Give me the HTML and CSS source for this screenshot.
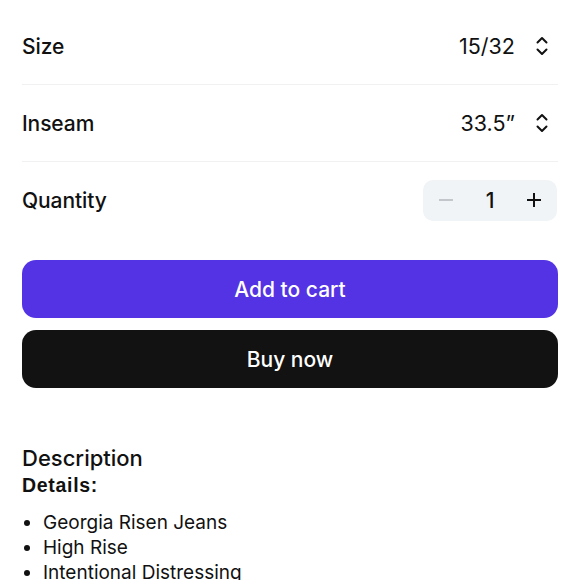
FILE: index.html
```html
<!DOCTYPE html>
<html>
<head>
<meta charset="utf-8">
<link rel="stylesheet" href="styles.css">
</head>
<body>
<div class="page">
  <div class="row">
    <span class="label">Size</span>
    <div class="select">
      <span class="value">15/32</span>
      <svg class="chev" width="14" height="22" viewBox="0 0 14 22"><path d="M2.5 7.5 L7 3 L11.5 7.5 M2.5 14.5 L7 19 L11.5 14.5" fill="none" stroke="#111" stroke-width="2" stroke-linecap="round" stroke-linejoin="round"/></svg>
    </div>
  </div>
  <div class="row">
    <span class="label">Inseam</span>
    <div class="select">
      <span class="value">33.5”</span>
      <svg class="chev" width="14" height="22" viewBox="0 0 14 22"><path d="M2.5 7.5 L7 3 L11.5 7.5 M2.5 14.5 L7 19 L11.5 14.5" fill="none" stroke="#111" stroke-width="2" stroke-linecap="round" stroke-linejoin="round"/></svg>
    </div>
  </div>
  <div class="row last">
    <span class="label">Quantity</span>
    <div class="stepper">
      <svg width="14" height="14" viewBox="0 0 14 14"><path d="M0 7 H14" stroke="#c3c7cb" stroke-width="2"/></svg>
      <span class="qty">1</span>
      <svg width="14" height="14" viewBox="0 0 14 14"><path d="M0 7 H14 M7 0 V14" stroke="#111" stroke-width="2"/></svg>
    </div>
  </div>
  <div class="actions">
    <button class="btn btn-cart">Add to cart</button>
    <button class="btn btn-buy">Buy now</button>
  </div>
  <div class="desc">
    <h2 class="desc-title">Description</h2>
    <div class="details">Details:</div>
    <ul class="list">
      <li>Georgia Risen Jeans</li>
      <li>High Rise</li>
      <li>Intentional Distressing</li>
    </ul>
  </div>
</div>
</body>
</html>
```
FILE: styles.css
```css
html, body {
  margin: 0;
  padding: 0;
  background: #fff;
}
body {
  font-family: Inter, "Liberation Sans", sans-serif;
  color: #111;
  overflow: hidden;
}
.page {
  padding: 8px 22px 0 22px;
}
.row {
  height: 76px;
  display: flex;
  align-items: center;
  justify-content: space-between;
  border-bottom: 1px solid #f0f1f2;
}
.row.last {
  border-bottom: none;
}
.label {
  font-size: 21px;
  font-weight: 500;
  letter-spacing: -0.1px;
}
.select {
  display: flex;
  align-items: center;
  gap: 20px;
  padding-right: 9px;
}
.value {
  font-size: 21.5px;
  font-weight: 400;
}
.chev {
  display: block;
}
.stepper {
  width: 134px;
  height: 41px;
  background: #f0f4f6;
  border-radius: 10px;
  display: flex;
  align-items: center;
  justify-content: space-between;
  padding: 0 16px 0 16px;
  box-sizing: border-box;
  margin-right: 1px;
}
.stepper svg {
  display: block;
}
.qty {
  font-size: 21px;
  font-weight: 500;
}
.actions {
  margin-top: 22px;
  display: flex;
  flex-direction: column;
  gap: 12px;
}
.btn {
  height: 58px;
  border: none;
  border-radius: 14px;
  font-family: Inter, "Liberation Sans", sans-serif;
  font-size: 21px;
  font-weight: 500;
  color: #fff;
  width: 100%;
}
.btn-cart {
  background: #5433e4;
}
.btn-buy {
  background: #121212;
}
.desc {
  margin-top: 57px;
}
.desc-title {
  margin: 0;
  font-size: 22px;
  font-weight: 500;
  line-height: 27px;
}
.details {
  font-family: "Liberation Sans", Arial, sans-serif;
  font-weight: 700;
  font-size: 19.5px;
  letter-spacing: 0.7px;
  line-height: 26px;
}
.list {
  margin: 12px 0 0 0;
  padding-left: 21px;
  font-size: 19px;
  line-height: 25px;
}
```
